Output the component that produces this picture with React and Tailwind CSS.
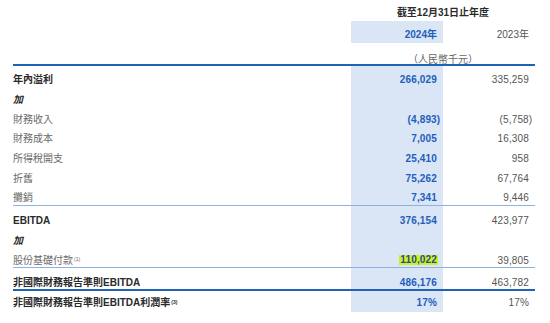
import React from "react";

const FONT = { fontFamily: '"Liberation Sans", "Noto Sans CJK TC", Arial, sans-serif' };

const HL = "bg-[#dae5f5]";
const BLUE = "text-[#1d5fbb]";

function Neg({ children }) {
  return (
    <span>
      ({children}
      <span className="-mr-[3.3px]">)</span>
    </span>
  );
}

function Row({ h, label, v1, v2, labelCls = "text-[#6a6a6a]", yellow = false }) {
  return (
    <div className="flex w-full">
      <div className={`flex-1 flex items-center text-[10px] ${h} ${labelCls}`}>{label}</div>
      <div
        className={`w-[92px] flex items-center justify-end pr-[6px] text-[10px] font-bold tracking-[0.15px] ${h} ${HL} ${BLUE}`}
      >
        {yellow ? <span className="bg-[#d3ef1f] text-[#1b4fa0] leading-[10px] px-[1px] -mr-[1px]">{v1}</span> : v1}
      </div>
      <div className={`w-[92px] flex items-center justify-end pr-[6px] text-[10px] tracking-[0.15px] text-[#555] ${h}`}>
        {v2}
      </div>
    </div>
  );
}

function Spacer({ h }) {
  return (
    <div className="flex w-full">
      <div className={`flex-1 ${h}`} />
      <div className={`w-[92px] ${h} ${HL}`} />
      <div className={`w-[92px] ${h}`} />
    </div>
  );
}

const R = "h-[19.67px]";

export default function App() {
  return (
    <div className="w-[550px] h-[323px] bg-white overflow-hidden" style={FONT}>
      <div className="pl-[13px] pr-[15px] flex flex-col">
        {/* Title */}
        <div className="flex w-full h-[21px] pt-[3px]">
          <div className="flex-1" />
          <div className="w-[184px] flex items-center justify-center text-[10px] font-bold text-[#2b2b2b]">
            截至12月31日止年度
          </div>
        </div>
        {/* Years */}
        <div className="flex w-full">
          <div className="flex-1 h-[22px]" />
          <div
            className={`w-[92px] h-[22px] pt-[5px] flex items-center justify-end pr-[6px] text-[10px] font-bold ${HL} ${BLUE}`}
          >
            2024年
          </div>
          <div className="w-[92px] h-[22px] pt-[5px] flex items-center justify-end pr-[6px] text-[10px] text-[#555]">
            2023年
          </div>
        </div>
        {/* Unit */}
        <div className="flex w-full h-[21px] pt-[11px]">
          <div className="flex-1" />
          <div className="w-[184px] flex items-center justify-center text-[10px] text-[#666]">（人民幣千元）</div>
        </div>
        <div className="h-[2px] w-full bg-[#1e63b6]" />

        {/* Group A */}
        <Spacer h="h-[4px]" />
        <Row h={R} label="年內溢利" labelCls="text-[#2a2a2a] font-bold" v1="266,029" v2="335,259" />
        <Row h={R} label={<span className="italic font-bold">加</span>} labelCls="text-[#2a2a2a]" v1="" v2="" />
        <Row h={R} label="財務收入" v1={<Neg>4,893</Neg>} v2={<Neg>5,758</Neg>} />
        <Row h={R} label="財務成本" v1="7,005" v2="16,308" />
        <Row h={R} label="所得稅開支" v1="25,410" v2="958" />
        <Row h={R} label="折舊" v1="75,262" v2="67,764" />
        <Row h="h-[17px] pt-[3px]" label="攤銷" v1="7,341" v2="9,446" />
        <div className="h-px w-full bg-[#8db2e0]" />

        {/* Group B */}
        <Spacer h="h-[5px]" />
        <Row h={R} label="EBITDA" labelCls="text-[#2a2a2a] font-bold" v1="376,154" v2="423,977" />
        <Row h={R} label={<span className="italic font-bold">加</span>} labelCls="text-[#2a2a2a]" v1="" v2="" />
        <Row
          h="h-[16.7px] pt-[3px]"
          label={
            <span>
              股份基礎付款<sup className="text-[5px] ml-[1px]">(1)</sup>
            </span>
          }
          v1="110,022"
          yellow
          v2="39,805"
        />
        <div className="h-px w-full bg-[#8db2e0]" />

        {/* Group C */}
        <Row
          h="h-[21px] pt-[9px]"
          label="非國際財務報告準則EBITDA"
          labelCls="text-[#2a2a2a] font-bold"
          v1="486,176"
          v2="463,782"
        />
        <div className="h-[2px] w-full bg-[#1e63b6]" />

        {/* Group D */}
        <Row
          h="h-[21px] pt-[3px]"
          label={
            <span>
              非國際財務報告準則EBITDA利潤率<sup className="text-[5px] ml-[1px]">(3)</sup>
            </span>
          }
          labelCls="text-[#2a2a2a] font-bold"
          v1="17%"
          v2="17%"
        />
      </div>
    </div>
  );
}
